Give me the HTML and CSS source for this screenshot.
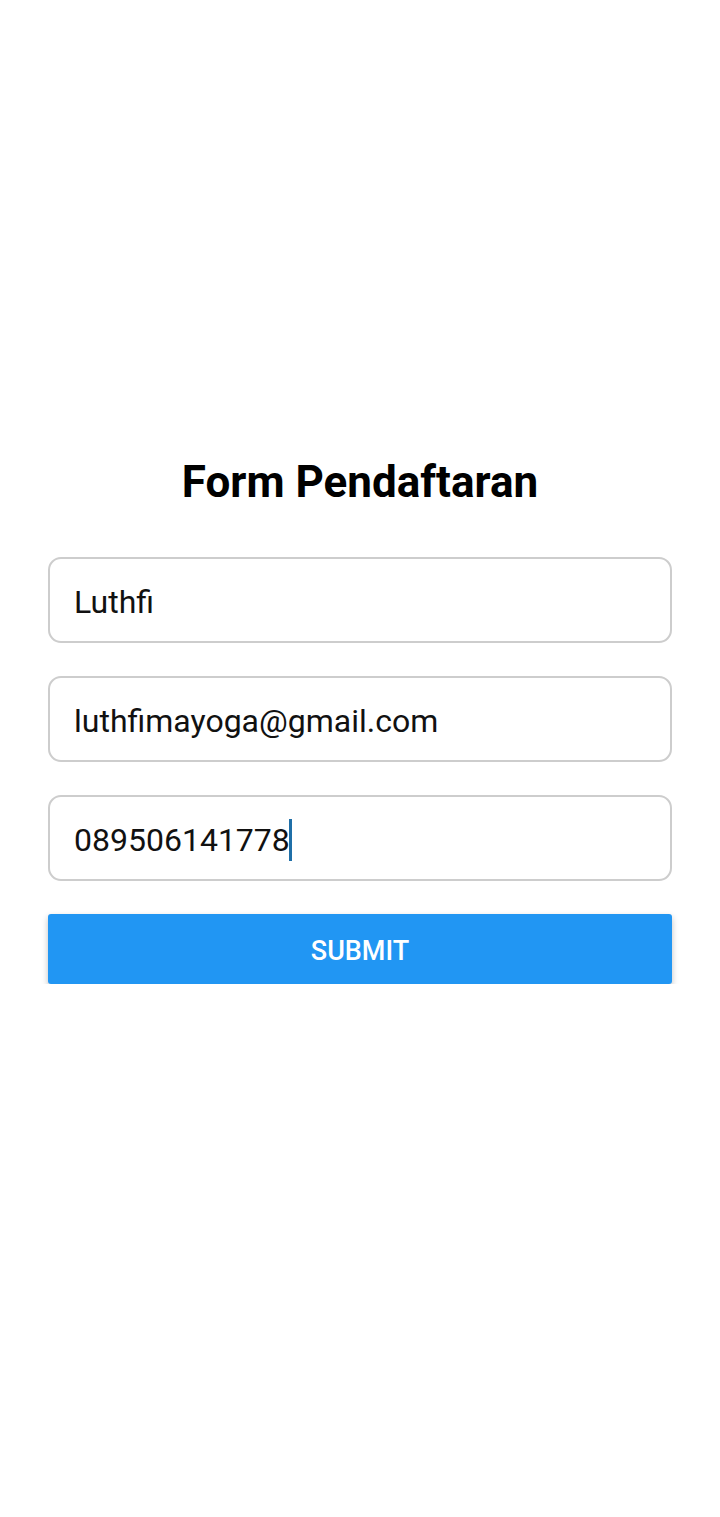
FILE: index.html
```html
<!DOCTYPE html>
<html lang="id">
<head>
<meta charset="utf-8">
<title>Form Pendaftaran</title>
<link rel="stylesheet" href="styles.css">
</head>
<body>
<main class="page">
  <h1 class="title">Form Pendaftaran</h1>
  <form class="form">
    <div class="field">Luthfi</div>
    <div class="field">luthfimayoga@gmail.com</div>
    <div class="field">089506141778<span class="caret"></span></div>
    <button type="button" class="submit">SUBMIT</button>
  </form>
</main>
</body>
</html>
```
FILE: styles.css
```css
html, body {
  margin: 0;
  padding: 0;
  background: #ffffff;
}
body {
  font-family: Roboto, "Noto Sans", sans-serif;
  color: #000;
}
.page {
  padding: 456px 48px 0 48px;
  display: flex;
  flex-direction: column;
}
.title {
  margin: 0;
  font-size: 44px;
  line-height: 52px;
  font-weight: 700;
  text-align: center;
  color: #000;
}
.form {
  margin-top: 49px;
  display: flex;
  flex-direction: column;
  gap: 33px;
}
.field {
  box-sizing: border-box;
  height: 86px;
  border: 2px solid #cdcdcd;
  border-radius: 13px;
  padding: 3px 24px 0 24px;
  display: flex;
  align-items: center;
  font-size: 32px;
  color: #111;
}
.caret {
  display: inline-block;
  width: 3px;
  height: 42px;
  background: #1f6fa8;
  margin-left: -1px;
}
.submit {
  height: 70px;
  border: none;
  border-radius: 3px;
  background: #2196f3;
  color: #fff;
  font-family: Roboto, "Noto Sans", sans-serif;
  font-size: 27px;
  font-weight: 500;
  box-shadow: 0 3px 6px rgba(0, 0, 0, 0.25);
  padding: 4px 0 0 0;
}
```
